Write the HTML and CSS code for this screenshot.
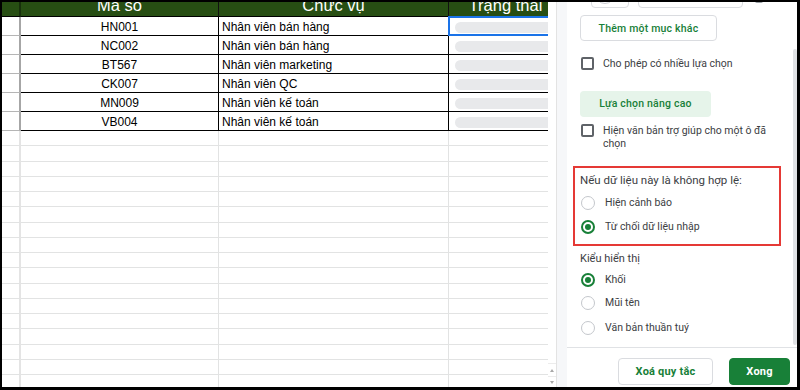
FILE: index.html
```html
<!DOCTYPE html>
<html lang="vi">
<head>
<meta charset="utf-8">
<title>Xác thực dữ liệu</title>
<link rel="stylesheet" href="styles.css">
</head>
<body>
<div class="frame">
  <div class="sheet">
    <div class="row head">
      <div class="c rn"></div>
      <div class="c a"><span>Mã số</span></div>
      <div class="c b"><span>Chức vụ</span></div>
      <div class="c cc"><span>Trạng thái</span></div>
    </div>
    <div class="row data">
      <div class="c rn"></div><div class="c a">HN001</div><div class="c b">Nhân viên bán hàng</div><div class="c cc sel"><i class="pill"></i></div>
    </div>
    <div class="row data">
      <div class="c rn"></div><div class="c a">NC002</div><div class="c b">Nhân viên bán hàng</div><div class="c cc"><i class="pill"></i></div>
    </div>
    <div class="row data">
      <div class="c rn"></div><div class="c a">BT567</div><div class="c b">Nhân viên marketing</div><div class="c cc"><i class="pill"></i></div>
    </div>
    <div class="row data">
      <div class="c rn"></div><div class="c a">CK007</div><div class="c b">Nhân viên QC</div><div class="c cc"><i class="pill"></i></div>
    </div>
    <div class="row data">
      <div class="c rn"></div><div class="c a">MN009</div><div class="c b">Nhân viên kế toán</div><div class="c cc"><i class="pill"></i></div>
    </div>
    <div class="row data">
      <div class="c rn"></div><div class="c a">VB004</div><div class="c b">Nhân viên kế toán</div><div class="c cc"><i class="pill"></i></div>
    </div>
    <div class="row empty"><div class="c rn"></div><div class="c a"></div><div class="c b"></div><div class="c cc"></div></div>
    <div class="row empty"><div class="c rn"></div><div class="c a"></div><div class="c b"></div><div class="c cc"></div></div>
    <div class="row empty"><div class="c rn"></div><div class="c a"></div><div class="c b"></div><div class="c cc"></div></div>
    <div class="row empty"><div class="c rn"></div><div class="c a"></div><div class="c b"></div><div class="c cc"></div></div>
    <div class="row empty"><div class="c rn"></div><div class="c a"></div><div class="c b"></div><div class="c cc"></div></div>
    <div class="row empty"><div class="c rn"></div><div class="c a"></div><div class="c b"></div><div class="c cc"></div></div>
    <div class="row empty"><div class="c rn"></div><div class="c a"></div><div class="c b"></div><div class="c cc"></div></div>
    <div class="row empty"><div class="c rn"></div><div class="c a"></div><div class="c b"></div><div class="c cc"></div></div>
    <div class="row empty"><div class="c rn"></div><div class="c a"></div><div class="c b"></div><div class="c cc"></div></div>
    <div class="row empty"><div class="c rn"></div><div class="c a"></div><div class="c b"></div><div class="c cc"></div></div>
    <div class="row empty"><div class="c rn"></div><div class="c a"></div><div class="c b"></div><div class="c cc"></div></div>
    <div class="row empty"><div class="c rn"></div><div class="c a"></div><div class="c b"></div><div class="c cc"></div></div>
    <div class="row empty"><div class="c rn"></div><div class="c a"></div><div class="c b"></div><div class="c cc"></div></div>
    <div class="row empty"><div class="c rn"></div><div class="c a"></div><div class="c b"></div><div class="c cc"></div></div>
    <div class="row empty"><div class="c rn"></div><div class="c a"></div><div class="c b"></div><div class="c cc"></div></div>
    <div class="row empty"><div class="c rn"></div><div class="c a"></div><div class="c b"></div><div class="c cc"></div></div>
    <div class="row empty"><div class="c rn"></div><div class="c a"></div><div class="c b"></div><div class="c cc"></div></div>
  </div>

  <div class="vscroll">
    <div class="arr up"><i></i></div>
    <div class="arr down"><i></i></div>
  </div>
  <div class="gutter"></div>

  <aside class="panel">
    <div class="pbody">
      <div class="toprow">
        <div class="handle"></div>
        <div class="colorbox"><i class="circle"></i></div>
        <div class="valuebox"></div>
        <svg class="trash" width="8" height="12" viewBox="0 0 8 12"><path d="M0 0h8v10a2 2 0 0 1-2 2H2a2 2 0 0 1-2-2z" fill="#9aa0a6"/></svg>
      </div>

      <button class="obtn">Thêm một mục khác</button>

      <div class="check">
        <span class="box"></span>
        <span class="lbl">Cho phép có nhiều lựa chọn</span>
      </div>

      <div class="adv">Lựa chọn nâng cao</div>

      <div class="check two">
        <span class="box"></span>
        <span class="lbl wrap">Hiện văn bản trợ giúp cho một ô đã chọn</span>
      </div>

      <div class="invalid">
        <div class="heading">Nếu dữ liệu này là không hợp lệ:</div>
        <div class="radio r1"><span class="dot"></span><span class="lbl">Hiện cảnh báo</span></div>
        <div class="radio r2 on"><span class="dot"></span><span class="lbl">Từ chối dữ liệu nhập</span></div>
      </div>

      <div class="heading h2">Kiểu hiển thị</div>
      <div class="radio k1 on"><span class="dot"></span><span class="lbl">Khối</span></div>
      <div class="radio k2"><span class="dot"></span><span class="lbl">Mũi tên</span></div>
      <div class="radio k3"><span class="dot"></span><span class="lbl">Văn bản thuần tuý</span></div>

      <div class="pscroll"></div>
    </div>
    <div class="pfoot">
      <button class="fbtn">Xoá quy tắc</button>
      <button class="fbtn primary">Xong</button>
    </div>
  </aside>
</div>
</body>
</html>
```

FILE: styles.css
```css
* { box-sizing: border-box; margin: 0; padding: 0; }

html, body {
  width: 800px;
  height: 390px;
  overflow: hidden;
  background: #000;
}

.frame {
  display: flex;
  height: 390px;
  padding: 2px 3px 3px 2px;
  background: #000;
}

/* ---------- spreadsheet ---------- */
.sheet {
  flex: none;
  width: 546px;
  background: #fff;
  overflow: hidden;
  font-family: "Liberation Sans", Arial, sans-serif;
  font-size: 12px;
  color: #000;
}

.row { display: flex; }

.c { flex: none; white-space: nowrap; }
.rn { width: 19px; border-right: 2px solid #a6a6a6; }
.a  { width: 198px; border-right: 1px solid #000; text-align: center; }
.b  { width: 230px; border-right: 1px solid #000; padding-left: 3px; }
.cc { width: 113px; }

.head {
  height: 15px;
  background: #274e13;
  overflow: hidden;
}
.head .c {
  height: 15px;
  border-bottom: 1px solid #000;
  overflow: hidden;
  color: #fff;
  font-size: 16.5px;
  text-align: center;
}
.head .rn { border-right-color: #17300b; }
.head .a, .head .b { border-right-color: #111; }
.head .b { padding-left: 0; }
.head .c span {
  display: block;
  line-height: 16.5px;
  margin-top: -5px;
}

.data { height: 19px; }
.data .c {
  height: 19px;
  border-bottom: 1px solid #000;
  line-height: 18px;
  padding-top: 1px;
}
.data .rn { border-bottom-color: #b5b5b5; }
.data .cc { padding-top: 0; }

.pill {
  display: block;
  width: 110px;
  height: 11px;
  margin: 5px 0 0 6px;
  border-radius: 6px;
  background: #e8e9eb;
}

.sel { position: relative; }
.sel::after {
  content: "";
  position: absolute;
  left: -1px;
  top: -1px;
  right: 0;
  bottom: -1px;
  border: 2px solid #1a73e8;
}

.empty { height: 15.25px; }
.empty .c {
  height: 15.25px;
  border-bottom: 1px solid #e2e3e3;
}
.empty .rn { border-right-color: #e4e4e4; }
.empty .a, .empty .b { border-right-color: #e2e3e3; }

/* sheet vertical scroll strip */
.vscroll {
  flex: none;
  width: 9px;
  background: #fff;
  border-right: 1px solid #e3e3e3;
  display: flex;
  flex-direction: column;
  justify-content: flex-end;
}
.arr {
  display: flex;
  align-items: center;
  justify-content: center;
  border-top: 1px solid #ececec;
}
.arr.up { height: 13px; }
.arr.down { height: 11px; }
.arr i {
  display: block;
  width: 0;
  height: 0;
  border-left: 2.5px solid transparent;
  border-right: 2.5px solid transparent;
}
.arr.up i { border-bottom: 3px solid #a8a8a8; }
.arr.down i { border-top: 3px solid #a8a8a8; }

.gutter {
  flex: none;
  width: 10px;
  background: #f6f7f9;
}

/* ---------- side panel ---------- */
.panel {
  flex: none;
  width: 230px;
  background: #fff;
  display: flex;
  flex-direction: column;
  font-family: Roboto, "Noto Sans", Arial, sans-serif;
  font-size: 10.5px;
  color: #3c4043;
}

.pbody {
  flex: none;
  height: 346px;
  overflow: hidden;
  position: relative;
  padding: 0 7px 0 13px;
  border-bottom: 1px solid #e0e2e5;
}

.toprow {
  display: flex;
  align-items: flex-end;
  height: 28px;
  margin-top: -22px;
}
.handle { width: 11px; flex: none; }
.colorbox {
  flex: none;
  width: 38px;
  height: 28px;
  border: 1px solid #dadce0;
  border-radius: 4px;
  display: flex;
  align-items: center;
  padding-left: 3px;
}
.circle {
  display: block;
  width: 20px;
  height: 20px;
  border-radius: 50%;
  border: 1px solid #c9ccd1;
}
.valuebox {
  flex: none;
  width: 105px;
  height: 28px;
  margin-left: 9px;
  border: 1px solid #dadce0;
  border-radius: 4px;
}
.trash {
  flex: none;
  margin-left: 12px;
  margin-bottom: 5px;
}

.obtn {
  display: block;
  margin-top: 7px;
  width: 137px;
  height: 26px;
  border: 1px solid #dadce0;
  border-radius: 4px;
  background: #fff;
  color: #188038;
  font: 500 10.5px Roboto, Arial, sans-serif;
  letter-spacing: 0.2px;
}

.check {
  display: flex;
  align-items: center;
  margin-top: 16px;
  padding-left: 1px;
}
.check .box {
  flex: none;
  width: 13px;
  height: 13px;
  border: 2px solid #5f6368;
  border-radius: 2px;
}
.check .lbl {
  margin-left: 9px;
  line-height: 13px;
}
.check.two {
  align-items: flex-start;
  margin-top: 7px;
}
.lbl.wrap { max-width: 172px; }

.adv {
  margin-top: 21px;
  width: 131px;
  height: 26px;
  line-height: 26px;
  border-radius: 4px;
  background: #e6f4ea;
  color: #188038;
  font-weight: 500;
  text-align: center;
  letter-spacing: 0.2px;
}

.invalid {
  margin-top: 16px;
  margin-left: -7px;
  width: 208px;
  border: 2px solid #e53935;
  padding: 6px 0 10px 5px;
}

.heading {
  font-size: 11.5px;
  line-height: 13px;
  color: #3c4043;
}
.heading.h2 { margin-top: 6px; font-size: 11px; }

.radio {
  display: flex;
  align-items: center;
  height: 14px;
  padding-left: 1px;
}
.radio .dot {
  flex: none;
  width: 14px;
  height: 14px;
  border-radius: 50%;
  border: 1.5px solid #c4c7cc;
  display: flex;
  align-items: center;
  justify-content: center;
}
.radio.on .dot { border: 2px solid #188038; }
.radio.on .dot::after {
  content: "";
  width: 6px;
  height: 6px;
  border-radius: 50%;
  background: #188038;
}
.radio .lbl { margin-left: 10px; line-height: 14px; }

.r1 { margin-top: 9px; }
.r2 { margin-top: 10px; }
.k1 { margin-top: 8px; }
.k2 { margin-top: 9px; }
.k3 { margin-top: 11px; }

.pscroll {
  position: absolute;
  right: 0;
  top: 47px;
  width: 4px;
  height: 296px;
  border-radius: 2px;
  background: #dfe1e4;
}

.pfoot {
  flex: 1;
  display: flex;
  justify-content: flex-end;
  gap: 16px;
  padding: 10px 7px 0 0;
}
.fbtn {
  width: 95px;
  height: 27px;
  border: 1px solid #dadce0;
  border-radius: 4px;
  background: #fff;
  color: #188038;
  font: 700 11px Roboto, Arial, sans-serif;
  letter-spacing: 0.2px;
}
.fbtn.primary {
  width: 61px;
  border-color: #188038;
  background: #188038;
  color: #fff;
}
```
